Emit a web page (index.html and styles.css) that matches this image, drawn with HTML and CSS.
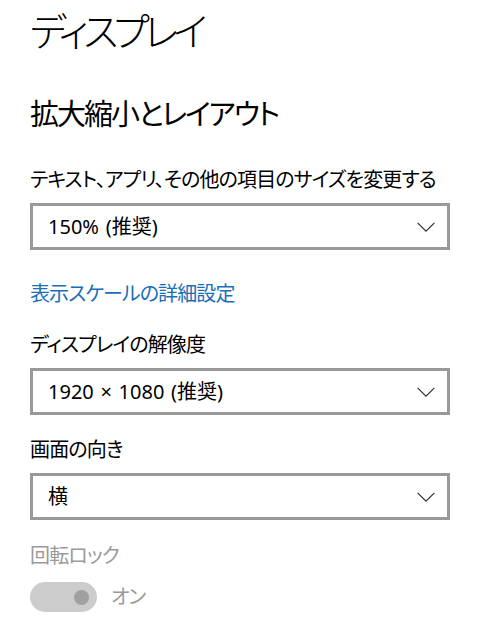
FILE: index.html
```html
<!DOCTYPE html>
<html lang="ja">
<head>
<meta charset="utf-8">
<title>ディスプレイ</title>
<link rel="stylesheet" href="styles.css">
</head>
<body>
<main class="page">
  <h1 class="title">ディスプレイ</h1>
  <h2 class="section">拡大縮小とレイアウト</h2>

  <div class="field field-scale">
    <div class="label">テキスト、アプリ、その他の項目のサイズを変更する</div>
    <div class="select">
      <span class="value">150% (推奨)</span>
      <svg class="chevron" width="18" height="10" viewBox="0 0 18 10"><path d="M0.6 0.8 L9 9.2 L17.4 0.8" fill="none" stroke="#2b2b2b" stroke-width="1.1"/></svg>
    </div>
  </div>

  <a class="link" href="#">表示スケールの詳細設定</a>

  <div class="field field-res">
    <div class="label">ディスプレイの解像度</div>
    <div class="select">
      <span class="value">1920 × 1080 (推奨)</span>
      <svg class="chevron" width="18" height="10" viewBox="0 0 18 10"><path d="M0.6 0.8 L9 9.2 L17.4 0.8" fill="none" stroke="#2b2b2b" stroke-width="1.1"/></svg>
    </div>
  </div>

  <div class="field field-orient">
    <div class="label">画面の向き</div>
    <div class="select">
      <span class="value">横</span>
      <svg class="chevron" width="18" height="10" viewBox="0 0 18 10"><path d="M0.6 0.8 L9 9.2 L17.4 0.8" fill="none" stroke="#2b2b2b" stroke-width="1.1"/></svg>
    </div>
  </div>

  <div class="field field-lock">
    <div class="label disabled">回転ロック</div>
    <div class="toggle-row">
      <span class="toggle"><span class="knob"></span></span>
      <span class="toggle-text">オン</span>
    </div>
  </div>
</main>
</body>
</html>
```

FILE: styles.css
```css
html, body {
  margin: 0;
  padding: 0;
  background: #fff;
}

body {
  font-family: "Noto Sans", "Noto Sans CJK JP", sans-serif;
  color: #000;
  font-feature-settings: "palt";
}

.page {
  display: flex;
  flex-direction: column;
  align-items: flex-start;
  padding: 0 0 0 30px;
}

.title {
  margin: 0;
  font-size: 39px;
  font-weight: 300;
  line-height: 62px;
  letter-spacing: -5.2px;
}

.section {
  margin: 32px 0 0 0;
  font-size: 29px;
  font-weight: 400;
  line-height: 40px;
  letter-spacing: -2px;
}

.field {
  display: flex;
  flex-direction: column;
  align-items: flex-start;
}

.field-scale { margin-top: 31px; }
.field-res { margin-top: 21px; }
.field-orient { margin-top: 20px; }
.field-lock { margin-top: 21px; }

.label {
  font-size: 20px;
  line-height: 30px;
  font-weight: 400;
  letter-spacing: -0.85px;
}

.label.disabled {
  color: #9a9a9a;
}

.select {
  box-sizing: border-box;
  width: 420px;
  height: 47px;
  margin-top: 8px;
  border: 3px solid #999;
  display: flex;
  align-items: center;
  justify-content: space-between;
  padding: 0 12px 0 15px;
  background: #fff;
}

.value {
  font-size: 20px;
  line-height: 28px;
  word-spacing: 1.5px;
}

.chevron {
  display: block;
}

.link {
  margin-top: 29px;
  font-size: 20px;
  line-height: 30px;
  color: #1a6fb8;
  text-decoration: none;
  letter-spacing: -0.9px;
}

.toggle-row {
  display: flex;
  align-items: center;
  margin-top: 11px;
}

.toggle {
  box-sizing: border-box;
  width: 67px;
  height: 30px;
  border-radius: 15px;
  background: #cccccc;
  display: flex;
  align-items: center;
  justify-content: flex-end;
  padding-right: 8px;
}

.knob {
  width: 15px;
  height: 15px;
  border-radius: 50%;
  background: #a0a0a0;
}

.toggle-text {
  margin-left: 14px;
  font-size: 20px;
  line-height: 28px;
  color: #9a9a9a;
  letter-spacing: -1px;
}
```
